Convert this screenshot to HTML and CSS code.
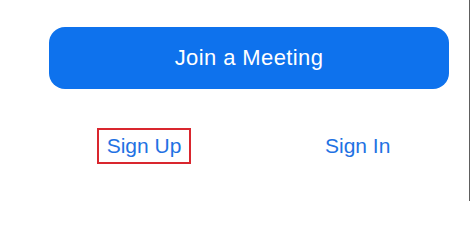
FILE: index.html
```html
<!DOCTYPE html>
<html>
<head>
<meta charset="utf-8">
<link rel="stylesheet" href="styles.css">
</head>
<body>
<div class="screen">
  <div class="join">Join a Meeting</div>
  <div class="links">
    <span class="link signup">Sign Up</span>
    <span class="link signin">Sign In</span>
  </div>
</div>
</body>
</html>
```
FILE: styles.css
```css
html, body {
  margin: 0;
  padding: 0;
  background: #ffffff;
}
.screen {
  width: 470px;
  height: 201px;
  box-sizing: border-box;
  border-right: 1px solid #5e5e5e;
  padding-top: 27px;
  padding-left: 49px;
  font-family: "Liberation Sans", Arial, sans-serif;
}
.join {
  width: 400px;
  height: 62px;
  border-radius: 16px;
  background: #0e72ed;
  color: #ffffff;
  font-size: 22px;
  letter-spacing: 0.4px;
  display: flex;
  align-items: center;
  justify-content: center;
}
.links {
  margin-top: 39px;
  display: flex;
  align-items: center;
}
.link {
  color: #1f72e3;
  font-size: 21px;
}
.signup {
  margin-left: 48px;
  width: 94px;
  height: 36px;
  box-sizing: border-box;
  border: 2px solid #d9262e;
  display: flex;
  align-items: center;
  justify-content: center;
}
.signin {
  margin-left: 134px;
}
```
